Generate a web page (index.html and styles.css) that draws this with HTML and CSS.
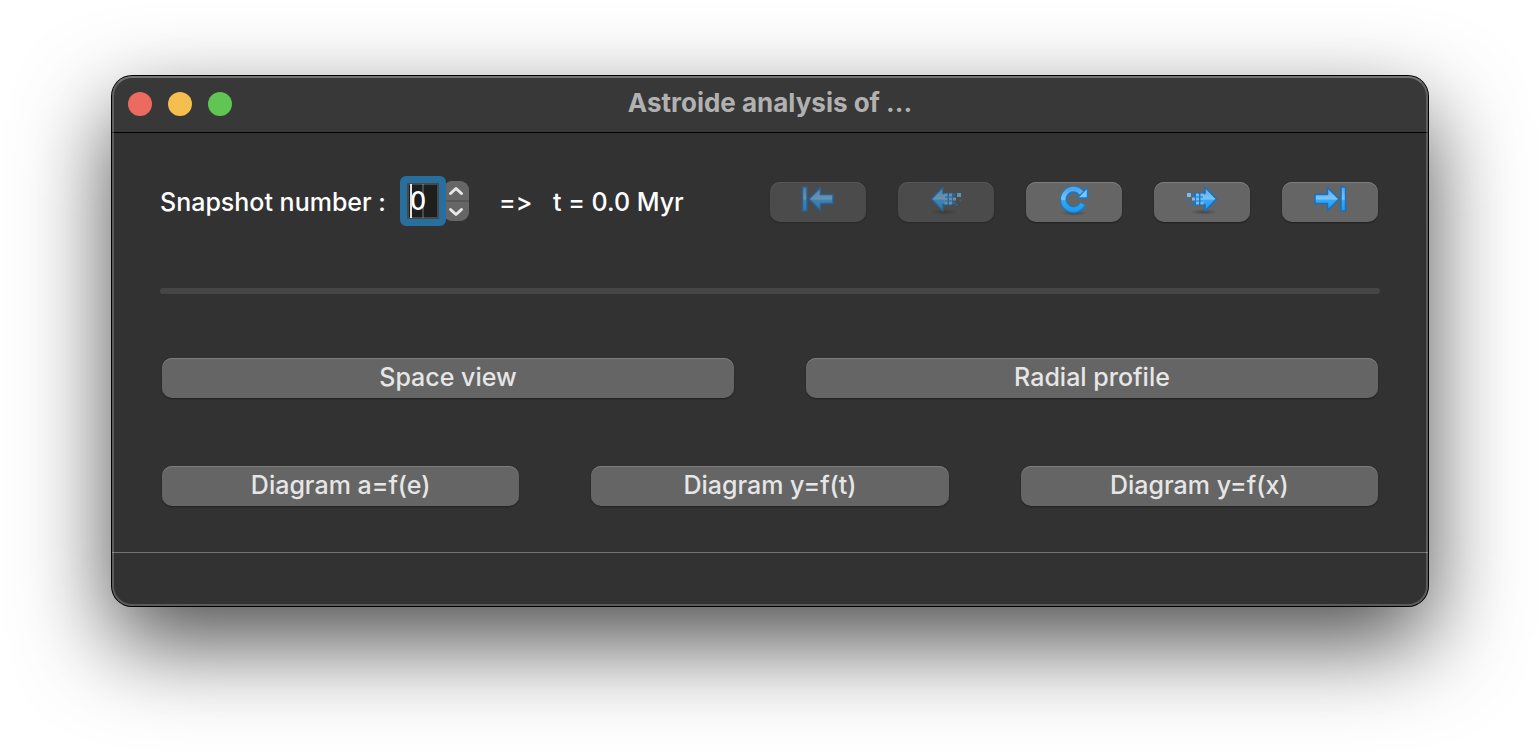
FILE: index.html
```html
<!DOCTYPE html>
<html lang="en">
<head>
<meta charset="utf-8">
<title>Astroide analysis of ...</title>
<link rel="stylesheet" href="styles.css">
</head>
<body>
<svg class="defs" aria-hidden="true">
  <defs>
    <linearGradient id="blue" x1="0" y1="0" x2="0" y2="1">
      <stop offset="0" stop-color="#4fa6ea"/>
      <stop offset="0.5" stop-color="#7cc4f7"/>
      <stop offset="0.55" stop-color="#35a8f6"/>
      <stop offset="1" stop-color="#1f9cf4"/>
    </linearGradient>
    <radialGradient id="shade">
      <stop offset="0" stop-color="#000" stop-opacity="0.3"/>
      <stop offset="1" stop-color="#000" stop-opacity="0"/>
    </radialGradient>
    <g id="end-arrow" fill="url(#blue)" stroke="#176fc0" stroke-width="1.5" stroke-linejoin="round">
      <path d="M33 12.500H45.500V5.500L57 17 45.500 28.500V21.500H33Z"/>
      <path d="M59 5H63.500V29H59Z"/>
    </g>
    <g id="dot-arrow">
      <ellipse cx="50" cy="30" rx="14" ry="3" fill="url(#shade)"/>
      <path d="M41 11H51V23H41Z" fill="#1c79c9"/>
      <path d="M49 11.500H51V5L62.500 17 51 29V22.500H49Z" fill="url(#blue)"/>
      <path d="M41 11.500H51V5L62.500 17 51 29V22.500H41" fill="none" stroke="#176fc0" stroke-width="1.500" stroke-linejoin="round"/>
      <path d="M33 11H37V15H33ZM38 15.500H41V18.500H38ZM42 11.500H45V14.500H42ZM42 15.500H45V18.500H42ZM42 19.500H45V22.500H42ZM46.500 11.500H49.500V14.500H46.500ZM46.500 15.500H49.500V18.500H46.500ZM46.500 19.500H49.500V22.500H46.500Z" fill="#72bff5"/>
      <path d="M32.500 17.500H34.500V19.500H32.500ZM36.500 22H38.500V24H36.500ZM38.500 11.500H41V14H38.500ZM38.500 19.500H41V22H38.500Z" fill="#1c79c9"/>
    </g>
  </defs>
</svg>
<main class="window">
  <header class="titlebar">
    <div class="lights">
      <button class="light close" aria-label="Close"></button>
      <button class="light minimize" aria-label="Minimize"></button>
      <button class="light zoom" aria-label="Zoom"></button>
    </div>
    <h1 class="title">Astroide analysis of ...</h1>
  </header>
  <section class="content">
    <div class="controls">
      <label class="label" for="snapshot">Snapshot number :</label>
      <div class="spin">
        <div class="field"><input class="number" id="snapshot" type="text" inputmode="numeric" value="0"></div>
        <div class="stepper">
          <button class="step" aria-label="Increase"><svg width="16" height="10" viewBox="0 0 16 10"><path d="M2.500 7.500 8 2.500l5.500 5"/></svg></button>
          <button class="step" aria-label="Decrease"><svg width="16" height="10" viewBox="0 0 16 10"><path d="M2.500 2.500 8 7.500l5.500-5"/></svg></button>
        </div>
      </div>
      <span class="arrow">=&gt;</span>
      <output class="time" for="snapshot">t = 0.0 Myr</output>
      <nav class="steps">
        <button class="button icon" disabled aria-label="First snapshot"><svg viewBox="0 0 96 40"><use href="#end-arrow" transform="matrix(-1 0 0 1 96 0)"/></svg></button>
        <button class="button icon" disabled aria-label="Previous snapshot"><svg viewBox="0 0 96 40"><use href="#dot-arrow" transform="matrix(-1 0 0 1 96 0)"/></svg></button>
        <button class="button icon" aria-label="Refresh"><svg viewBox="0 0 96 40">
          <ellipse cx="48" cy="31" rx="13" ry="3" fill="url(#shade)"/>
          <path d="M55 10.500A10.200 10.200 0 1 0 57 22" fill="none" stroke="#187acb" stroke-width="7"/>
          <path d="M51.500 15.800 61.500 5.500V16Z" fill="#7cc8fa" stroke="#187acb" stroke-width="1.500" stroke-linejoin="round"/>
          <path d="M55.500 11A10.200 10.200 0 1 0 56.500 22" fill="none" stroke="url(#blue)" stroke-width="4.500"/>
        </svg></button>
        <button class="button icon" aria-label="Next snapshot"><svg viewBox="0 0 96 40"><use href="#dot-arrow"/></svg></button>
        <button class="button icon" aria-label="Last snapshot"><svg viewBox="0 0 96 40"><use href="#end-arrow"/></svg></button>
      </nav>
    </div>
    <hr class="rule">
    <div class="row">
      <button class="button">Space view</button>
      <button class="button">Radial profile</button>
    </div>
    <div class="row">
      <button class="button">Diagram a=f(e)</button>
      <button class="button">Diagram y=f(t)</button>
      <button class="button">Diagram y=f(x)</button>
    </div>
  </section>
  <footer class="status"></footer>
</main>
</body>
</html>
```

FILE: styles.css
```css
* { box-sizing: border-box; }
body {
  margin: 0;
  padding: 76px 112px 148px;
  background: #fff;
  color: #fff;
  font: 500 25px/32px Inter, "Liberation Sans", sans-serif;
  font-variant-ligatures: no-contextual;
  overflow: hidden;
}
button { border: 0; padding: 0; font: inherit; color: inherit; }
.defs { position: absolute; width: 0; height: 0; }
.window {
  position: relative;
  border-radius: 20px;
  background: #323232;
  box-shadow: 0 0 0 1px #000, 0 36px 92px rgba(0, 0, 0, 0.7);
}
/* light rim drawn over the window's edge */
.window::after {
  content: "";
  position: absolute;
  inset: 0;
  border: 2px solid rgba(255, 255, 255, 0.2);
  border-top-color: rgba(255, 255, 255, 0.3);
  border-radius: 20px;
  pointer-events: none;
}
.titlebar {
  display: grid;
  grid-template-columns: 1fr auto 1fr;
  align-items: center;
  height: 57px;
  padding: 0 16px;
  border-bottom: 1px solid #000;
  border-radius: 20px 20px 0 0;
  background: #383838;
}
.lights { display: flex; gap: 16px; }
.light { width: 24px; height: 24px; border-radius: 50%; }
.close { background: #ed6a5e; }
.minimize { background: #f5bf4f; }
.zoom { background: #61c554; }
.title { margin: 0; font-size: 26px; font-weight: 700; line-height: 32px; padding-bottom: 2px; color: #b1b1b1; }
.content { padding: 43px 48px 46px; }
.controls { display: flex; align-items: center; height: 50px; padding-right: 2px; }
.label, .arrow, .time, .steps { padding-top: 2px; white-space: nowrap; }
.label { width: 240px; }
.spin { display: flex; align-items: center; }
.field {
  position: relative;
  z-index: 1;
  width: 46px;
  height: 50px;
  padding: 2px;
  border: 5px solid #266f9f;
  border-radius: 6px;
  background: #266f9f;
}
.number {
  display: block;
  width: 100%;
  height: 100%;
  padding: 0 0 0 1px;
  border: 2px solid #484848;
  border-radius: 0;
  outline: 0;
  background: #1e1e1e;
  color: #fff;
  font: inherit;
}
/* text cursor and cell edge */
.field::before, .field::after { content: ""; position: absolute; top: 3px; bottom: 3px; }
.field::before { left: 5px; width: 2px; background: #e4e4e4; }
.field::after { left: 17px; width: 2px; background: rgba(255, 255, 255, 0.2); }
.stepper {
  display: grid;
  grid-template-rows: 1fr 1fr;
  gap: 2px;
  width: 26px;
  height: 40px;
  margin-left: -3px;
  border-radius: 9px;
  overflow: hidden;
  background: #565656;
}
.step { display: grid; place-items: center; background: #666; }
.step path { fill: none; stroke: #e8e8e8; stroke-width: 3; stroke-linecap: round; stroke-linejoin: round; }
.arrow { margin-left: 30px; width: 54px; }
.steps { display: flex; gap: 32px; margin-left: auto; }
.button {
  height: 40px;
  padding-bottom: 2px;
  border-radius: 10px;
  background: #656565;
  box-shadow: inset 0 1px #7d7d7d, 0 1px 2px rgba(0, 0, 0, 0.35);
  color: #e6e6e6;
}
.icon { width: 96px; padding: 0; }
.icon svg { display: block; width: 96px; height: 40px; }
.icon:disabled { background: #4b4b4b; box-shadow: inset 0 1px #575757, 0 1px 2px rgba(0, 0, 0, 0.2); }
.icon:disabled svg { opacity: 0.6; }
.rule { height: 6px; margin: 62px 0 64px; border: 0; border-radius: 3px; background: #464646; }
.row { display: grid; grid-auto-flow: column; grid-auto-columns: 1fr; gap: 72px; padding: 0 2px; }
.row + .row { margin-top: 68px; }
.status { height: 54px; border-top: 1px solid #747474; }
```
